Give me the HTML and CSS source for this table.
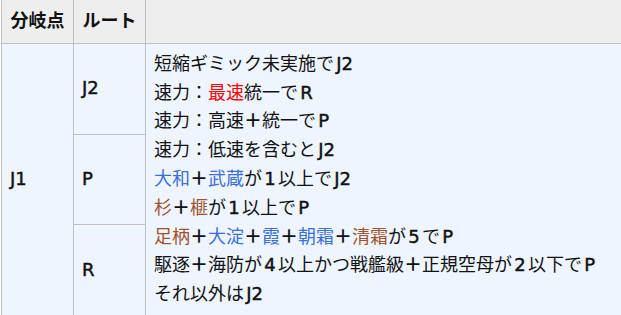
FILE: index.html
```html
<!DOCTYPE html>
<html lang="ja">
<head>
<meta charset="utf-8">
<link rel="stylesheet" href="styles.css">
</head>
<body>
<table class="route-table">
  <colgroup>
    <col class="c-branch">
    <col class="c-route">
    <col class="c-cond">
  </colgroup>
  <thead>
    <tr>
      <th>分岐点</th>
      <th>ルート</th>
      <th></th>
    </tr>
  </thead>
  <tbody>
    <tr>
      <td class="mid lt" rowspan="3">J1</td>
      <td class="mid lt">J2</td>
      <td class="cond" rowspan="3">短縮ギミック未実施で<span class="lt">J2</span><br>速力：<span class="red">最速</span>統一で<span class="lt">R</span><br>速力：高速<span class="pl">＋</span>統一で<span class="lt">P</span><br>速力：低速を含むと<span class="lt">J2</span><br><span class="blue">大和</span><span class="pl">＋</span><span class="blue">武蔵</span>が<span class="lt">1</span>以上で<span class="lt">J2</span><br><span class="brown">杉</span><span class="pl">＋</span><span class="brown">榧</span>が<span class="lt">1</span>以上で<span class="lt">P</span><br><span class="brown">足柄</span><span class="pl">＋</span><span class="blue">大淀</span><span class="pl">＋</span><span class="blue">霞</span><span class="pl">＋</span><span class="blue">朝霜</span><span class="pl">＋</span><span class="brown">清霜</span>が<span class="lt">5</span>で<span class="lt">P</span><br>駆逐<span class="pl">＋</span>海防が<span class="lt">4</span>以上かつ戦艦級<span class="pl">＋</span>正規空母が<span class="lt">2</span>以下で<span class="lt">P</span><br>それ以外は<span class="lt">J2</span></td>
    </tr>
    <tr>
      <td class="mid lt">P</td>
    </tr>
    <tr>
      <td class="mid lt">R</td>
    </tr>
  </tbody>
</table>
</body>
</html>
```

FILE: styles.css
```css
html, body {
  margin: 0;
  padding: 0;
  overflow: hidden;
  background: #ffffff;
}

.route-table {
  margin: -1px 0 0 1px;
  border-collapse: collapse;
  table-layout: fixed;
  width: 680px;
  font-family: "DejaVu Sans", "Noto Sans CJK JP", sans-serif;
  font-size: 18px;
  line-height: 28.8px;
  color: #111111;
  text-autospace: normal;
}

.c-branch { width: 72px; }
.c-route { width: 72px; }

.route-table th,
.route-table td {
  border: 1px solid #c0c0c0;
}

.route-table th {
  background: #eeeeee;
  font-weight: bold;
  text-align: center;
  padding: 7px 4px;
  white-space: nowrap;
}

.route-table td {
  background: #eef5ff;
  padding: 6px 8px;
  vertical-align: top;
}

.route-table td.mid {
  vertical-align: middle;
}

.lt {
  -webkit-text-stroke: 0.45px currentColor;
}

.pl {
  font-weight: bold;
}

.red { color: #ff0000; }
.blue { color: #3a6fd8; }
.brown { color: #a0522d; }
```
